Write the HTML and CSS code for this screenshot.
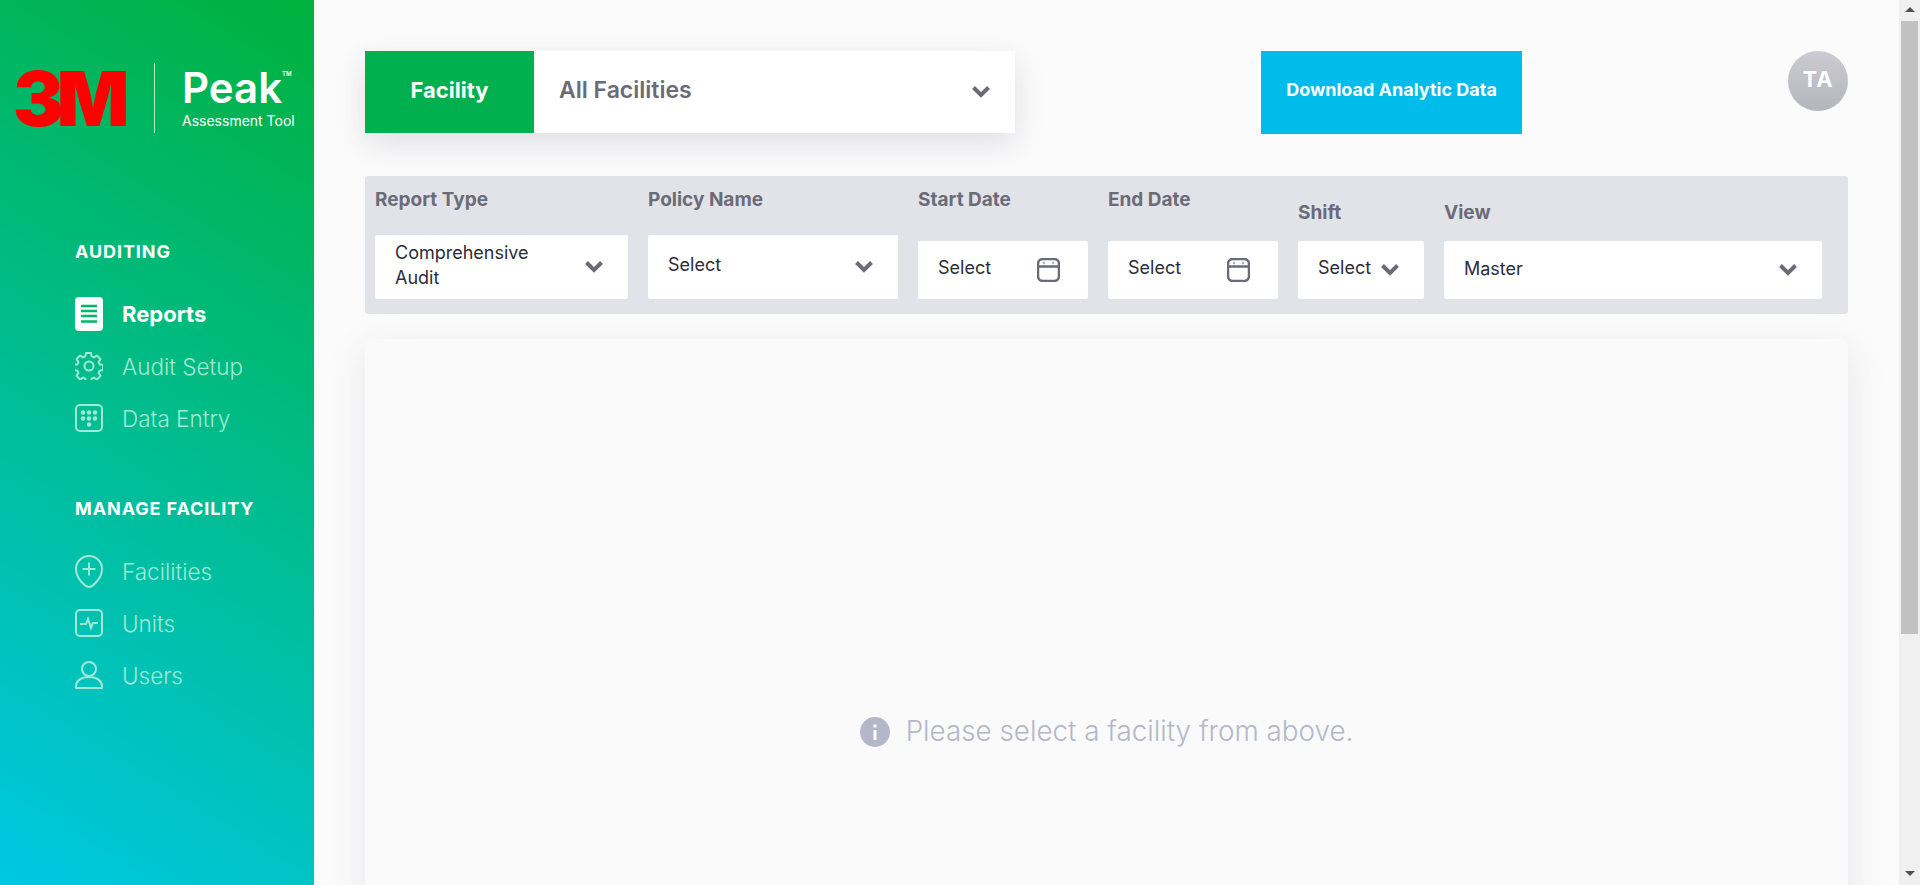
FILE: index.html
```html
<!DOCTYPE html>
<html lang="en">

<head>
    <meta charset="UTF-8">
    <meta name="viewport" content="width=device-width, initial-scale=1.0">
    <title>Peak Assessment Tool</title>
    <link rel="stylesheet" href="styles.css">
</head>

<body>
    <div class="page">
        <aside class="sidebar">
            <div class="logo">
                <span class="logo-3m">3M</span>
                <span class="logo-line"></span>
                <div class="logo-name">
                    <div class="logo-peak">Peak<sup>TM</sup></div>
                    <div class="logo-sub">Assessment Tool</div>
                </div>
            </div>

            <h2 class="nav-title nav-title-first">AUDITING</h2>
            <a class="nav-item active">
                <svg class="nav-icon" viewBox="0 0 28 34"><rect width="28" height="34" rx="4" fill="#fff"/><path d="M6 9h16M6 14h16M6 19h16M6 24.500h16" stroke="#00b968" stroke-width="2.400"/></svg>
                <span>Reports</span>
            </a>
            <a class="nav-item">
                <svg class="nav-icon" viewBox="0 0 28 28" fill="none" stroke="currentColor" stroke-width="2" stroke-linejoin="round"><circle cx="14" cy="14" r="4.500"/><path d="M11.500 1h5l.7 3.400 2.300 1 2.900-1.900 3.600 3.600-1.900 2.900 1 2.300 3.400.7v5l-3.400.7-1 2.300 1.900 2.900-3.600 3.600-2.900-1.900-2.300 1-.7 3.400h-5l-.7-3.400-2.300-1-2.900 1.900-3.600-3.600 1.900-2.900-1-2.300-3.400-.7v-5l3.400-.7 1-2.300-1.900-2.900 3.600-3.600 2.900 1.900 2.300-1z" transform="translate(-.5 0)"/></svg>
                <span>Audit Setup</span>
            </a>
            <a class="nav-item">
                <svg class="nav-icon" viewBox="0 0 28 28"><rect x="1" y="1" width="26" height="26" rx="4" fill="none" stroke="currentColor" stroke-width="2"/><g fill="currentColor"><circle cx="8" cy="8.500" r="2.200"/><circle cx="14" cy="8.500" r="2.200"/><circle cx="20" cy="8.500" r="2.200"/><circle cx="8" cy="14.500" r="2.200"/><circle cx="14" cy="14.500" r="2.200"/><circle cx="20" cy="14.500" r="2.200"/><circle cx="14" cy="20.500" r="2.200"/></g></svg>
                <span>Data Entry</span>
            </a>

            <h2 class="nav-title nav-title-second">MANAGE FACILITY</h2>
            <a class="nav-item">
                <svg class="nav-icon" viewBox="0 0 28 33" fill="none" stroke="currentColor" stroke-width="2"><path d="M14 32c-3 0-13-8-13-18a13 13 0 0 1 26 0c0 10-10 18-13 18z"/><path d="M14 7.500v13M7.500 14h13"/></svg>
                <span>Facilities</span>
            </a>
            <a class="nav-item">
                <svg class="nav-icon" viewBox="0 0 28 28" fill="none" stroke="currentColor" stroke-width="2"><rect x="1" y="1" width="26" height="26" rx="4"/><path d="M5 15h6l2-5 3 9 2-5h5"/></svg>
                <span>Units</span>
            </a>
            <a class="nav-item">
                <svg class="nav-icon" viewBox="0 0 28 28" fill="none" stroke="currentColor" stroke-width="2"><circle cx="14" cy="8" r="7"/><path d="M1 27v-2c0-5 5-9 13-9s13 4 13 9v2z" stroke-linejoin="round"/></svg>
                <span>Users</span>
            </a>
        </aside>

        <main class="main">
            <div class="topbar">
                <div class="facility">
                    <div class="facility-label">Facility</div>
                    <div class="facility-select">
                        <span>All Facilities</span>
                        <svg class="chevron" viewBox="0 0 18 12"><path d="M1.500 1.500L9 9l7.500-7.500"/></svg>
                    </div>
                </div>
                <button class="download" type="button">Download Analytic Data</button>
                <div class="avatar">TA</div>
            </div>

            <div class="filters">
                <div class="field field-report">
                    <label>Report Type</label>
                    <div class="input input-tall">
                        <span>Comprehensive<br>Audit</span>
                        <svg class="chevron" viewBox="0 0 18 12"><path d="M1.500 1.500L9 9l7.500-7.500"/></svg>
                    </div>
                </div>
                <div class="field field-policy">
                    <label>Policy Name</label>
                    <div class="input input-tall">
                        <span>Select</span>
                        <svg class="chevron" viewBox="0 0 18 12"><path d="M1.500 1.500L9 9l7.500-7.500"/></svg>
                    </div>
                </div>
                <div class="field field-date">
                    <label>Start Date</label>
                    <div class="input">
                        <span>Select</span>
                        <svg class="calendar" viewBox="0 0 23 24"><rect x="1" y="1" width="21" height="22" rx="5"/><path d="M1 8.500h21"/><path d="M6.500 5h1M15.500 5h1"/></svg>
                    </div>
                </div>
                <div class="field field-date">
                    <label>End Date</label>
                    <div class="input">
                        <span>Select</span>
                        <svg class="calendar" viewBox="0 0 23 24"><rect x="1" y="1" width="21" height="22" rx="5"/><path d="M1 8.500h21"/><path d="M6.500 5h1M15.500 5h1"/></svg>
                    </div>
                </div>
                <div class="field field-shift">
                    <label>Shift</label>
                    <div class="input">
                        <span>Select</span>
                        <svg class="chevron" viewBox="0 0 18 12"><path d="M1.500 1.500L9 9l7.500-7.500"/></svg>
                    </div>
                </div>
                <div class="field field-view">
                    <label>View</label>
                    <div class="input input-view">
                        <span>Master</span>
                        <svg class="chevron" viewBox="0 0 18 12"><path d="M1.500 1.500L9 9l7.500-7.500"/></svg>
                    </div>
                </div>
            </div>

            <div class="card">
                <svg class="info-icon" viewBox="0 0 30 30"><circle cx="15" cy="15" r="15" fill="#b4b7c9"/><rect x="13.500" y="13" width="3" height="10" fill="#fff"/><rect x="13.500" y="7.500" width="3" height="3" fill="#fff"/></svg>
                <p>Please select a facility from above.</p>
            </div>
        </main>
    </div>

    <div class="scrollbar">
        <span class="arrow-up"></span>
        <span class="scroll-thumb"></span>
        <span class="arrow-down"></span>
    </div>
</body>

</html>
```
FILE: styles.css
```css
/* General Styles */
body {
    margin: 0;
    font-family: "Inter", "Liberation Sans", sans-serif;
    background-color: #fbfbfb;
    color: #2c2c38;
}

.page {
    display: flex;
    align-items: flex-start;
}

/* Window scrollbar */
.scrollbar {
    position: fixed;
    top: 0;
    right: 0;
    bottom: 0;
    display: flex;
    flex-direction: column;
    align-items: center;
    width: 21px;
    background-color: #f0f0f0;
}

.arrow-up,
.arrow-down {
    width: 0;
    height: 0;
    border-left: 5px solid transparent;
    border-right: 5px solid transparent;
}

.arrow-up {
    margin-top: 7px;
    border-bottom: 5px solid #505050;
}

.arrow-down {
    margin-top: auto;
    margin-bottom: 9px;
    border-top: 5px solid #505050;
}

.scroll-thumb {
    width: 17px;
    height: 613px;
    margin-top: 9px;
    background-color: #c1c1c1;
}

/* Sidebar */
.sidebar {
    position: sticky;
    top: 0;
    flex: 0 0 314px;
    height: 100vh;
    padding-left: 75px;
    box-sizing: border-box;
    background: linear-gradient(32deg, #00c8e4 0%, #00b13c 100%);
    color: #a0e9d6;
}

.logo {
    display: flex;
    align-items: center;
    height: 70px;
    margin: 63px 0 0 -59px;
}

.logo-3m {
    width: 118px;
    margin-left: -3px;
    margin-right: 3px;
    font-size: 76px;
    font-weight: 900;
    letter-spacing: -7px;
    line-height: 70px;
    color: #f00;
}

.logo-line {
    width: 1px;
    height: 70px;
    margin-left: 20px;
    background-color: rgba(255, 255, 255, 0.7);
}

.logo-name {
    margin-left: 27px;
    color: #fff;
}

.logo-peak {
    margin-top: -2px;
    font-size: 42px;
    font-weight: 600;
    line-height: 44px;
}

.logo-peak sup {
    font-size: 6px;
    line-height: 0;
    vertical-align: 27px;
}

.logo-sub {
    margin-top: 3px;
    font-size: 14px;
    line-height: 16px;
    white-space: nowrap;
}

.nav-title {
    margin: 0;
    font-size: 18px;
    font-weight: 700;
    letter-spacing: 0.9px;
    line-height: 20px;
    color: #fff;
}

.nav-title-first {
    margin-top: 109px;
    margin-bottom: 26px;
}

.nav-title-second {
    margin-top: 55px;
    margin-bottom: 26px;
}

.nav-item {
    display: flex;
    align-items: center;
    height: 52px;
    font-size: 22.500px;
    font-weight: 300;
}

.nav-item span {
    margin-left: 19px;
}

.nav-item.active {
    font-weight: 700;
    font-size: 22px;
    color: #fff;
}

.nav-icon {
    display: block;
    width: 28px;
    flex: none;
}

/* Main area */
.main {
    flex: 1;
    min-width: 0;
    padding: 51px 72px 90px 51px;
}

.topbar {
    display: flex;
    align-items: flex-start;
}

.facility {
    display: flex;
    width: 650px;
    height: 82px;
    background-color: #fff;
    box-shadow: 0 10px 30px rgba(60, 60, 90, 0.14);
}

.facility-label {
    display: flex;
    align-items: center;
    justify-content: center;
    width: 169px;
    padding-bottom: 5px;
    box-sizing: border-box;
    font-size: 22px;
    font-weight: 700;
    color: #fff;
    background-color: #00b04f;
}

.facility-select {
    display: flex;
    flex: 1;
    align-items: center;
    justify-content: space-between;
    padding: 0 25px;
    font-size: 23px;
    font-weight: 600;
    color: #6b6b78;
}

.facility-select span {
    margin-bottom: 5px;
}

.chevron {
    display: block;
    flex: none;
    width: 18px;
    height: 12px;
    fill: none;
    stroke: #6b6b78;
    stroke-width: 4;
}

.download {
    width: 261px;
    height: 83px;
    margin-left: 246px;
    padding-bottom: 8px;
    border: none;
    font-family: inherit;
    font-size: 18px;
    font-weight: 700;
    color: #fff;
    background-color: #00bceb;
}

.avatar {
    width: 60px;
    height: 60px;
    margin-left: auto;
    border-radius: 50%;
    font-size: 22px;
    font-weight: 700;
    letter-spacing: 1px;
    line-height: 56px;
    text-align: center;
    color: #fff;
    background: linear-gradient(#cbcbd1, #b5b5bc);
}

/* Filters */
.filters {
    display: flex;
    align-items: flex-end;
    gap: 20px;
    margin-top: 42px;
    padding: 12px 26px 15px 10px;
    border-radius: 3px;
    background-color: #e2e3e8;
}

.field label {
    display: block;
    font-size: 19px;
    font-weight: 700;
    line-height: 24px;
    color: #6b6b78;
}

.field-report { width: 253px; }
.field-policy { width: 250px; }
.field-date { width: 170px; }
.field-shift { width: 126px; }
.field-view { flex: 1; }

.field-report label,
.field-policy label {
    margin-bottom: 23px;
}

.field-date label {
    margin-bottom: 29px;
}

.field-shift label,
.field-view label {
    margin-bottom: 16px;
}

.input {
    display: flex;
    align-items: center;
    justify-content: space-between;
    height: 58px;
    padding: 0 25px 0 20px;
    border-radius: 2px;
    font-size: 18px;
    line-height: 25px;
    background-color: #fff;
}

.input span {
    margin-bottom: 5px;
}

.input-view span {
    margin-bottom: 3px;
}

.input-tall {
    height: 64px;
}

.field-date .input {
    padding-right: 28px;
}

.calendar {
    display: block;
    width: 23px;
    height: 24px;
    fill: none;
    stroke: #6b6b78;
    stroke-width: 2.500;
}

/* Message card */
.card {
    display: flex;
    align-items: center;
    justify-content: center;
    gap: 16px;
    height: 784px;
    margin-top: 25px;
    margin-bottom: 4px;
    border-radius: 8px;
    background-color: #fafafa;
    box-shadow: 0 10px 40px rgba(60, 60, 90, 0.1);
}

.info-icon {
    display: block;
    width: 30px;
    height: 30px;
    margin-top: 2px;
}

.card p {
    margin: 0;
    font-size: 27.800px;
    font-weight: 300;
    color: #b4b7c9;
}
```
